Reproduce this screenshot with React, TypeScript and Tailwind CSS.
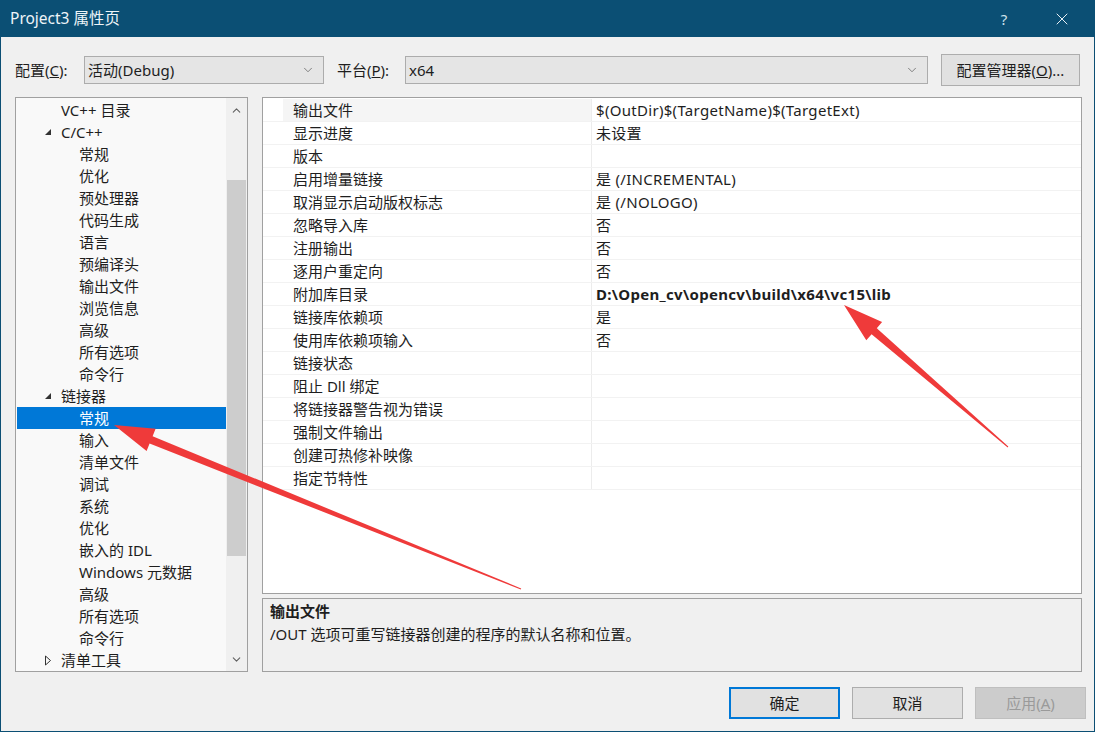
import { ChevronDown, ChevronUp, X } from "lucide-react"

const font = { fontFamily: '"Noto Sans", "Noto Sans CJK SC", sans-serif' }

type TreeItem = { label: string; level: 1 | 2; open?: boolean; closed?: boolean; selected?: boolean }

const tree: TreeItem[] = [
  { label: "VC++ 目录", level: 1 },
  { label: "C/C++", level: 1, open: true },
  { label: "常规", level: 2 },
  { label: "优化", level: 2 },
  { label: "预处理器", level: 2 },
  { label: "代码生成", level: 2 },
  { label: "语言", level: 2 },
  { label: "预编译头", level: 2 },
  { label: "输出文件", level: 2 },
  { label: "浏览信息", level: 2 },
  { label: "高级", level: 2 },
  { label: "所有选项", level: 2 },
  { label: "命令行", level: 2 },
  { label: "链接器", level: 1, open: true },
  { label: "常规", level: 2, selected: true },
  { label: "输入", level: 2 },
  { label: "清单文件", level: 2 },
  { label: "调试", level: 2 },
  { label: "系统", level: 2 },
  { label: "优化", level: 2 },
  { label: "嵌入的 IDL", level: 2 },
  { label: "Windows 元数据", level: 2 },
  { label: "高级", level: 2 },
  { label: "所有选项", level: 2 },
  { label: "命令行", level: 2 },
  { label: "清单工具", level: 1, closed: true },
]

const props: [string, string, boolean?][] = [
  ["输出文件", "$(OutDir)$(TargetName)$(TargetExt)"],
  ["显示进度", "未设置"],
  ["版本", ""],
  ["启用增量链接", "是 (/INCREMENTAL)"],
  ["取消显示启动版权标志", "是 (/NOLOGO)"],
  ["忽略导入库", "否"],
  ["注册输出", "否"],
  ["逐用户重定向", "否"],
  ["附加库目录", "D:\\Open_cv\\opencv\\build\\x64\\vc15\\lib", true],
  ["链接库依赖项", "是"],
  ["使用库依赖项输入", "否"],
  ["链接状态", ""],
  ["阻止 Dll 绑定", ""],
  ["将链接器警告视为错误", ""],
  ["强制文件输出", ""],
  ["创建可热修补映像", ""],
  ["指定节特性", ""],
]

function Combo({ value, width }: { value: string; width: string }) {
  return (
    <div className={`${width} h-[28px] flex items-center justify-between border border-[#acacac] bg-[#e5e5e5] pl-[3px] pr-[8px]`}>
      <span>{value}</span>
      <ChevronDown size={14} strokeWidth={1.2} className="text-[#555]" />
    </div>
  )
}

function TreePanel() {
  return (
    <div className="w-[233px] border border-[#a0a0a0] bg-[#f9f9f9] flex pt-[1px] pl-[1px]">
      <div className="flex-1 flex flex-col">
        {tree.map((t, i) => (
          <div
            key={i}
            className={`h-[22px] flex items-center ${t.selected ? "bg-[#0078d7] text-white" : "text-[#1e1e1e]"} ${t.level === 2 ? "pl-[62px]" : "pl-[27px]"}`}
          >
            {t.level === 1 && (
              <span className="w-[17px] shrink-0 flex items-center">
                {t.open && (
                  <svg width="8" height="8" viewBox="0 0 8 8">
                    <path d="M7 1 L7 7 L1 7 Z" fill="#333" />
                  </svg>
                )}
                {t.closed && (
                  <svg width="8" height="11" viewBox="0 0 8 11">
                    <path d="M1.5 1 L6.5 5.5 L1.5 10 Z" fill="none" stroke="#333" />
                  </svg>
                )}
              </span>
            )}
            <span>{t.label}</span>
          </div>
        ))}
      </div>
      <div className="w-[21px] bg-[#f0f0f0] flex flex-col items-center mt-[-1px]">
        <div className="h-[24px] flex items-center justify-center">
          <ChevronUp size={13} strokeWidth={2} className="text-[#606060]" />
        </div>
        <div className="h-[58px]" />
        <div className="w-[19px] h-[376px] bg-[#cdcdcd]" />
        <div className="flex-1" />
        <div className="h-[24px] flex items-center justify-center">
          <ChevronDown size={13} strokeWidth={2} className="text-[#606060]" />
        </div>
      </div>
    </div>
  )
}

function PropGrid() {
  return (
    <div className="flex-1 border border-[#a0a0a0] bg-white pt-[1px]">
      {props.map(([name, value, bold], i) => (
        <div key={i} className="h-[23px] flex border-b border-[#f2f2f2]">
          <div className="w-[20px]" />
          <div className={`w-[309px] flex items-center pl-[10px] border-r border-[#ececec] ${i === 0 ? "bg-[#f5f5f5]" : ""}`}>
            {name}
          </div>
          <div className={`flex-1 flex items-center pl-[4px] tracking-[0.3px] ${bold ? "font-bold" : ""}`}>{value}</div>
        </div>
      ))}
    </div>
  )
}

function Arrows() {
  return (
    <svg className="absolute inset-0 pointer-events-none" width="1095" height="732">
      <polygon
        points="113,424 154.6,427.8 151.6,435.2 520.2,587.5 519.8,588.5 148.6,442.6 145.6,450"
        fill="#ef3a3a"
      />
      <polygon
        points="843,304 881.1,321.1 875.8,327.2 1007.3,445.6 1006.7,446.4 870.6,333.2 865.3,339.3"
        fill="#ef3a3a"
      />
    </svg>
  )
}

export default function App() {
  return (
    <div
      className="relative w-[1095px] h-[732px] flex flex-col border border-[#0b4f74] bg-[#f0f0f0] text-[15px] text-[#1e1e1e] overflow-hidden"
      style={font}
    >
      <header className="h-[36px] shrink-0 bg-[#0b4f74] text-[#eef4f8] flex items-center pl-[9px]">
        <span className="flex-1 text-[15.5px]">Project3 属性页</span>
        <span className="w-[36px] text-center text-[15px] text-[#cfe3ee] mr-[30px]">?</span>
        <X size={20} strokeWidth={1.2} className="mr-[22px] text-[#e8f0f5]" />
      </header>

      <div className="flex items-center mt-[17px] pl-[14px] pr-[14px] h-[32px]">
        <span className="w-[69px]">
          配置(<span className="underline">C</span>):
        </span>
        <Combo value="活动(Debug)" width="w-[240px]" />
        <span className="w-[68px] ml-[13px]">
          平台(<span className="underline">P</span>):
        </span>
        <Combo value="x64" width="w-[523px]" />
        <div className="ml-[13px] w-[139px] h-[32px] border border-[#adadad] bg-[#e1e1e1] flex items-center justify-center">
          配置管理器(<span className="underline">O</span>)...
        </div>
      </div>

      <div className="flex gap-[14px] mt-[11px] pl-[14px] pr-[12px] h-[575px]">
        <TreePanel />
        <div className="flex-1 flex flex-col gap-[4px]">
          <PropGrid />
          <div className="h-[74px] border border-[#a0a0a0] bg-[#f0f0f0] pl-[7px] pt-[1px]">
            <div className="font-bold leading-[23px]">输出文件</div>
            <div className="leading-[23px]">/OUT 选项可重写链接器创建的程序的默认名称和位置。</div>
          </div>
        </div>
      </div>

      <div className="flex justify-end gap-[12px] mt-[15px] pr-[8px]">
        <div className="w-[111px] h-[32px] border-2 border-[#0078d7] bg-[#e1e1e1] flex items-center justify-center">确定</div>
        <div className="w-[111px] h-[32px] border border-[#adadad] bg-[#e1e1e1] flex items-center justify-center">取消</div>
        <div className="w-[111px] h-[32px] border border-[#bfbfbf] bg-[#cccccc] text-[#9a9a9a] flex items-center justify-center">
          应用(<span className="underline">A</span>)
        </div>
      </div>

      <Arrows />
    </div>
  )
}
